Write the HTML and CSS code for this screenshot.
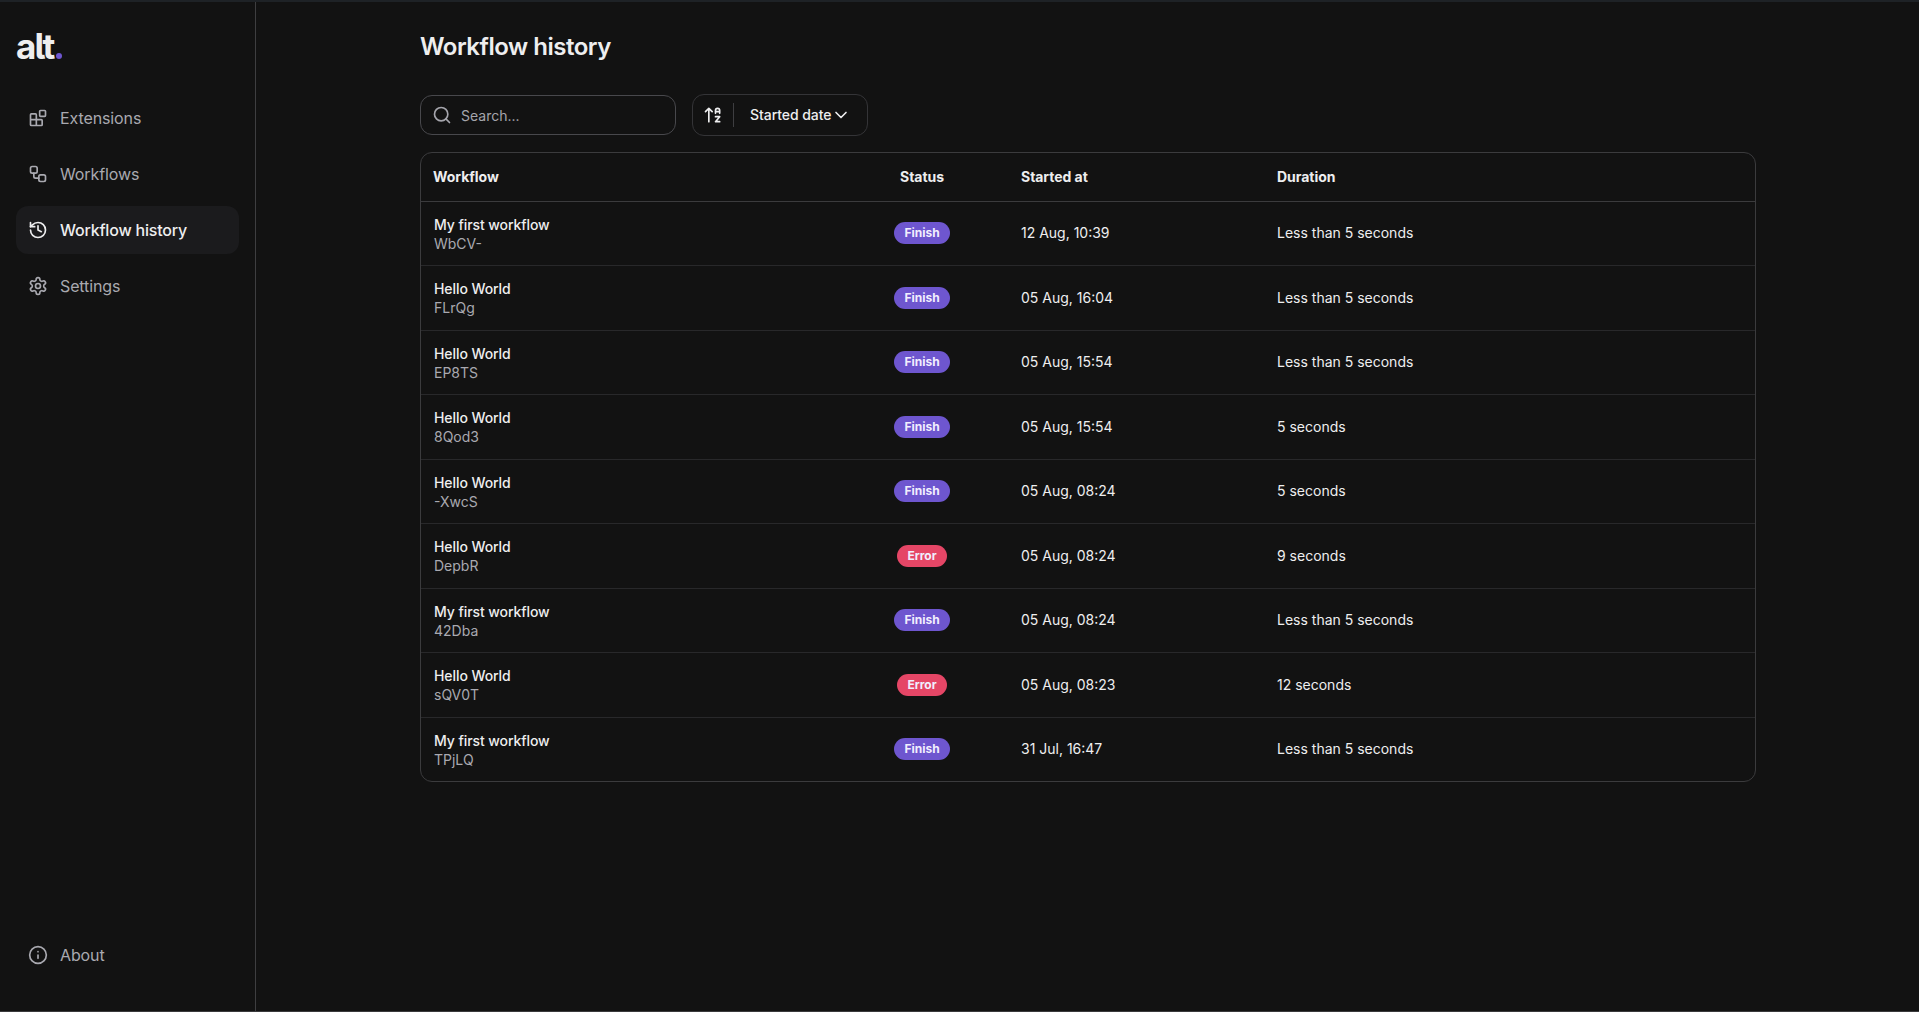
FILE: index.html
```html
<!DOCTYPE html>
<html lang="en">
<head>
<meta charset="utf-8">
<title>Workflow history</title>
<link rel="stylesheet" href="styles.css">
</head>
<body>
<div class="app">
  <aside class="sidebar">
    <div class="logo">alt<span class="logo-dot"></span></div>
    <nav class="nav">
      <a class="nav-item"><svg class="icon" viewBox="0 0 24 24"><rect x="14" y="3" width="7" height="7" rx="1"/><path d="M10 21V8a1 1 0 0 0-1-1H4a1 1 0 0 0-1 1v12a1 1 0 0 0 1 1h12a1 1 0 0 0 1-1v-5a1 1 0 0 0-1-1H3"/></svg><span>Extensions</span></a>
      <a class="nav-item"><svg class="icon" viewBox="0 0 24 24"><rect x="3" y="3" width="8" height="8" rx="2"/><path d="M7 11v4a2 2 0 0 0 2 2h4"/><rect x="13" y="13" width="8" height="8" rx="2"/></svg><span>Workflows</span></a>
      <a class="nav-item active"><svg class="icon" viewBox="0 0 24 24"><path d="M3 12a9 9 0 1 0 9-9 9.75 9.75 0 0 0-6.74 2.74L3 8"/><path d="M3 3v5h5"/><path d="M12 7v5l4 2"/></svg><span>Workflow history</span></a>
      <a class="nav-item"><svg class="icon" viewBox="0 0 24 24"><path d="M12.22 2h-.44a2 2 0 0 0-2 2v.18a2 2 0 0 1-1 1.73l-.43.25a2 2 0 0 1-2 0l-.15-.08a2 2 0 0 0-2.73.73l-.22.38a2 2 0 0 0 .73 2.73l.15.1a2 2 0 0 1 1 1.72v.51a2 2 0 0 1-1 1.74l-.15.09a2 2 0 0 0-.73 2.73l.22.38a2 2 0 0 0 2.73.73l.15-.08a2 2 0 0 1 2 0l.43.25a2 2 0 0 1 1 1.73V20a2 2 0 0 0 2 2h.44a2 2 0 0 0 2-2v-.18a2 2 0 0 1 1-1.73l.43-.25a2 2 0 0 1 2 0l.15.08a2 2 0 0 0 2.73-.73l.22-.39a2 2 0 0 0-.73-2.73l-.15-.08a2 2 0 0 1-1-1.74v-.5a2 2 0 0 1 1-1.74l.15-.09a2 2 0 0 0 .73-2.73l-.22-.38a2 2 0 0 0-2.73-.73l-.15.08a2 2 0 0 1-2 0l-.43-.25a2 2 0 0 1-1-1.73V4a2 2 0 0 0-2-2z"/><circle cx="12" cy="12" r="3"/></svg><span>Settings</span></a>
      <a class="nav-item about"><svg class="icon" viewBox="0 0 24 24"><circle cx="12" cy="12" r="10"/><path d="M12 16v-4M12 8h.01"/></svg><span>About</span></a>
    </nav>
  </aside>
  <main class="main">
    <h1 class="title">Workflow history</h1>
    <div class="toolbar">
      <label class="search"><svg class="icon" viewBox="0 0 24 24"><circle cx="11" cy="11" r="8"/><path d="m21 21-4.300-4.300"/></svg><span>Search...</span></label>
      <div class="sort">
        <svg class="icon" viewBox="0 0 24 24"><path d="m3 8 4-4 4 4M7 4v16M20 8h-5M15 10V6.500a2.500 2.500 0 0 1 5 0V10M15 14h5l-5 6h5"/></svg>
        <span class="sort-value"><span>Started date</span><svg class="icon" viewBox="0 0 24 24"><path d="m6 9 6 6 6-6"/></svg></span>
      </div>
    </div>
    <div class="table">
      <div class="row head"><span>Workflow</span><span class="status">Status</span><span>Started at</span><span>Duration</span></div>
      <div class="row"><div class="name">My first workflow<small>WbCV-</small></div><div class="status"><b class="badge">Finish</b></div><span>12 Aug, 10:39</span><span>Less than 5 seconds</span></div>
      <div class="row"><div class="name">Hello World<small>FLrQg</small></div><div class="status"><b class="badge">Finish</b></div><span>05 Aug, 16:04</span><span>Less than 5 seconds</span></div>
      <div class="row"><div class="name">Hello World<small>EP8TS</small></div><div class="status"><b class="badge">Finish</b></div><span>05 Aug, 15:54</span><span>Less than 5 seconds</span></div>
      <div class="row"><div class="name">Hello World<small>8Qod3</small></div><div class="status"><b class="badge">Finish</b></div><span>05 Aug, 15:54</span><span>5 seconds</span></div>
      <div class="row"><div class="name">Hello World<small>-XwcS</small></div><div class="status"><b class="badge">Finish</b></div><span>05 Aug, 08:24</span><span>5 seconds</span></div>
      <div class="row"><div class="name">Hello World<small>DepbR</small></div><div class="status"><b class="badge error">Error</b></div><span>05 Aug, 08:24</span><span>9 seconds</span></div>
      <div class="row"><div class="name">My first workflow<small>42Dba</small></div><div class="status"><b class="badge">Finish</b></div><span>05 Aug, 08:24</span><span>Less than 5 seconds</span></div>
      <div class="row"><div class="name">Hello World<small>sQV0T</small></div><div class="status"><b class="badge error">Error</b></div><span>05 Aug, 08:23</span><span>12 seconds</span></div>
      <div class="row"><div class="name">My first workflow<small>TPjLQ</small></div><div class="status"><b class="badge">Finish</b></div><span>31 Jul, 16:47</span><span>Less than 5 seconds</span></div>
    </div>
  </main>
</div>
</body>
</html>
```
FILE: styles.css
```css
* { box-sizing: border-box; }
body {
  margin: 0;
  background: #121212;
  color: #eeeeef;
  font: 14px/19px Inter, "Liberation Sans", sans-serif;
}
.icon {
  width: 20px;
  height: 20px;
  flex: none;
  fill: none;
  stroke: currentColor;
  stroke-width: 2;
  stroke-linecap: round;
  stroke-linejoin: round;
}
.app {
  display: flex;
  height: 1012px;
  border-top: 2px solid #1e2226;
  border-bottom: 1px solid #3a3a3c;
}
.sidebar {
  display: flex;
  flex-direction: column;
  width: 256px;
  padding: 24px 16px 32px;
  border-right: 1px solid #3e3e40;
}
.logo {
  display: flex;
  align-items: baseline;
  height: 40px;
  font-size: 35px;
  font-weight: 700;
  line-height: 41px;
  letter-spacing: -1.8px;
  font-feature-settings: "cv05";
}
.logo-dot {
  width: 6px;
  height: 6px;
  margin-left: 3px;
  border-radius: 50%;
  background: #6e56cf;
}
.nav {
  display: flex;
  flex: 1;
  flex-direction: column;
  gap: 8px;
  padding-top: 28px;
}
.nav-item {
  display: flex;
  align-items: center;
  gap: 12px;
  height: 48px;
  padding: 0 12px;
  border-radius: 12px;
  color: #a9a9b0;
  font-size: 16px;
  letter-spacing: -0.11px;
}
.nav-item.active { background: #1b1b1d; color: #eeeeef; font-weight: 500; letter-spacing: -0.2px; }
.about { margin-top: auto; }
.main { width: 1336px; margin-left: 164px; padding-top: 29px; }
.title { margin: 0; font-size: 24px; font-weight: 600; line-height: 32px; letter-spacing: -0.48px; }
.toolbar { display: flex; align-items: center; gap: 16px; height: 42px; margin-top: 31px; }
.search {
  display: flex;
  align-items: center;
  gap: 9px;
  width: 256px;
  height: 40px;
  padding: 0 11px;
  border: 1px solid #48484c;
  border-radius: 12px;
  color: #a5a5ac;
}
.search span { padding-top: 1px; }
.sort {
  display: flex;
  align-items: center;
  width: 176px;
  height: 42px;
  padding-left: 10px;
  border: 1px solid #343437;
  border-radius: 12px;
}
.sort-value {
  display: flex;
  align-items: center;
  height: 24px;
  margin-left: 10px;
  padding-left: 16px;
  border-left: 1px solid #3e3e41;
  font-weight: 500;
  letter-spacing: -0.06px;
}
.sort-value span { padding-bottom: 2px; }
.table { margin-top: 16px; border: 1px solid #3b3b3d; border-radius: 12px; }
.row {
  display: grid;
  grid-template-columns: 390px 198px 256px 1fr;
  align-items: center;
  height: 65px;
  padding-left: 12px;
  border-bottom: 1px solid #28282a;
}
.row > span { padding-bottom: 2px; }
.row:nth-child(even) { height: 64px; }
.row.head { height: 49px; border-color: #3b3b3d; font-weight: 700; letter-spacing: -0.04px; }
.row:last-child { height: 63px; border: 0; }
.name { padding-left: 1px; font-weight: 500; letter-spacing: -0.08px; }
.name small { display: block; color: #a9a9b0; font-size: 14px; font-weight: 400; letter-spacing: 0; }
.status { justify-self: center; padding-bottom: 1px; }
.badge {
  display: block;
  height: 22px;
  padding: 0 10px;
  border-radius: 11px;
  background: #6e56cf;
  color: #f1eefe;
  font-size: 12px;
  font-weight: 700;
  line-height: 21px;
}
.badge.error { background: #e54666; }
```
